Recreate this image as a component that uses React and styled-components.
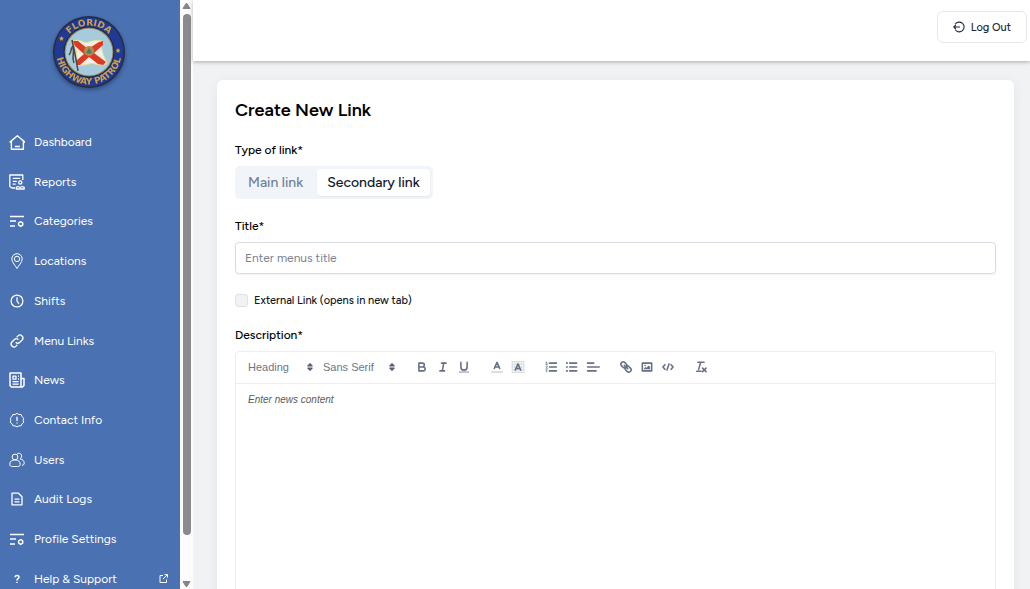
import { useState } from 'react';
import styled, { createGlobalStyle } from 'styled-components';

const GlobalStyle = createGlobalStyle`
    * {
        box-sizing: border-box;
    }
    body {
        margin: 0;
        overflow: hidden;
        background-color: #f1f2f4;
        font-family: "Figtree", Lato, "Liberation Sans", sans-serif;
        color: #000;
    }
    button, input {
        font-family: inherit;
    }
`;

const Page = styled.div`
    display: flex;
    height: 100vh;
`;

const Sidebar = styled.aside`
    width: 180px;
    flex-shrink: 0;
    display: flex;
    flex-direction: column;
    background-color: #4a71b2;
`;

const LogoLink = styled.a`
    display: flex;
    justify-content: center;
    padding: 14px 3px 42px 0;
    svg {
        filter: drop-shadow(0 2px 2px rgba(0, 0, 0, 0.35));
    }
`;

const Nav = styled.nav`
    flex: 1;
    display: flex;
    flex-direction: column;
    justify-content: space-between;
`;

const NavLink = styled.a`
    height: 20px;
    padding: 0 12px 0 9px;
    display: flex;
    align-items: center;
    gap: 9px;
    color: #fff;
    font-size: 12px;
    line-height: 20px;
    text-decoration: none;
    svg {
        flex-shrink: 0;
    }
    span {
        flex: 1;
    }
`;

const ScrollTrack = styled.div`
    width: 13px;
    flex-shrink: 0;
    display: flex;
    flex-direction: column;
    align-items: center;
    padding: 3px 0 2px;
    background-color: #fcfcfc;
`;

const ScrollThumb = styled.div`
    width: 8px;
    height: 521px;
    max-height: 90%;
    margin: 5px 0 auto;
    border-radius: 4px;
    background-color: #8b8b8b;
`;

const Main = styled.main`
    flex: 1;
    min-width: 0;
    display: flex;
    flex-direction: column;
`;

const Header = styled.header`
    height: 61px;
    flex-shrink: 0;
    display: flex;
    justify-content: flex-end;
    align-items: flex-start;
    padding: 11px 3px;
    background-color: #fff;
    box-shadow: 0 1px 4px rgba(0, 0, 0, 0.3);
    z-index: 1;
`;

const LogoutButton = styled.button`
    height: 32px;
    padding: 0 15px;
    display: flex;
    align-items: center;
    gap: 6px;
    border: 1px solid #e6e8ec;
    border-radius: 6px;
    background-color: #fff;
    color: #1f2937;
    font-size: 11px;
    font-weight: 500;
    cursor: pointer;
`;

const Content = styled.div`
    flex: 1;
    min-height: 0;
    padding: 19px 16px 19px 24px;
    overflow-y: auto;
    scrollbar-width: none;
`;

const Card = styled.form`
    display: flex;
    flex-direction: column;
    gap: 18px;
    padding: 18px;
    border-radius: 6px;
    background-color: #fff;
    box-shadow: 0 2px 12px rgba(0, 0, 0, 0.06);
`;

const Title = styled.h1`
    margin: 0;
    font-size: 18px;
    line-height: 25px;
    font-weight: 600;
`;

const Field = styled.div`
    display: flex;
    flex-direction: column;
    align-items: stretch;
    gap: 7px;
`;

const Label = styled.label`
    font-size: 12px;
    line-height: 18px;
    font-weight: 500;
`;

const Tabs = styled.div`
    align-self: flex-start;
    height: 33px;
    display: flex;
    gap: 4px;
    padding: 3px;
    border-radius: 5px;
    background-color: #f1f4f9;
`;

const Tab = styled.button`
    padding: 0 10px;
    border: none;
    border-radius: 4px;
    background-color: ${(props) => (props.$active ? '#fff' : 'transparent')};
    box-shadow: ${(props) => (props.$active ? '0 1px 2px rgba(0, 0, 0, 0.06)' : 'none')};
    color: ${(props) => (props.$active ? '#0f172a' : '#71809a')};
    font-size: 14px;
    font-weight: 500;
    cursor: pointer;
`;

const Input = styled.input`
    width: 100%;
    height: 32px;
    padding: 0 9px;
    border: 1px solid #d8dce6;
    border-radius: 4px;
    font-size: 12px;
    box-shadow: 0 1px 2px rgba(0, 0, 0, 0.05);
    &::placeholder {
        color: #788292;
    }
`;

const CheckRow = styled.label`
    height: 16px;
    display: flex;
    align-items: center;
    gap: 6px;
    font-size: 11px;
    font-weight: 500;
    color: #111827;
`;

const Checkbox = styled.input`
    appearance: none;
    width: 13px;
    height: 13px;
    margin: 0;
    border: 1px solid #dfe2e7;
    border-radius: 3px;
    background-color: #f1f2f4;
    &:checked {
        background-color: #4a71b2;
    }
`;

const Editor = styled.div`
    border: 1px solid #ebedf5;
    border-radius: 4px;
`;

const Toolbar = styled.div`
    height: 32px;
    display: flex;
    align-items: center;
    gap: 12px;
    padding: 0 6px 2px;
    border-bottom: 1px solid #ebedf5;
`;

const Group = styled.div`
    display: flex;
    align-items: center;
`;

const Picker = styled.div`
    display: flex;
    align-items: center;
    width: ${(props) => props.$width}px;
    svg {
        margin-left: -12px;
        pointer-events: none;
    }
`;

const Select = styled.select`
    appearance: none;
    width: 100%;
    height: 20px;
    padding: 0 6px;
    border: none;
    background-color: transparent;
    color: #6b7588;
    font-family: "Liberation Sans", Arial, sans-serif;
    font-size: 11px;
`;

const ToolButton = styled.button`
    width: 21px;
    height: 20px;
    padding: 0;
    display: flex;
    align-items: center;
    justify-content: center;
    border: none;
    background: none;
    cursor: pointer;
`;

const TextArea = styled.textarea`
    display: block;
    width: 100%;
    height: 320px;
    padding: 9px 12px;
    border: none;
    outline: none;
    resize: none;
    font-family: "Liberation Sans", Arial, sans-serif;
    font-size: 10px;
    line-height: 14px;
    &::placeholder {
        color: #5c5c5c;
        font-style: italic;
    }
`;

const navIcons = {
    home: <path d="M1.2 8.4L9 1.8l7.8 6.6M3 7.2v8h12v-8M6.5 12.5h5" strokeWidth="1.4" transform="translate(-.6 0)" />,
    reports: (
        <>
            <path d="M6 14H3L.8 12.5V1h13v5M3.8 4.3h7.3M3.8 7.3h4M3.8 10.2h2.8" />
            <circle cx="11.3" cy="8.4" r="1.6" />
            <path d="M7.3 15v-1.7l1.7-.8 2.2 1 2.2-1 1.8.8V15z" />
        </>
    ),
    settings: (
        <>
            <path d="M1 3.5h14M1 8h6M1 13h5" />
            <path d="M11.7 8.7l2 1.2v2.3l-2 1.2-2-1.2V9.9z" strokeWidth="1.5" />
        </>
    ),
    pin: (
        <g strokeWidth="1">
            <path d="M8 15.5C6.6 12.7 2.8 9.5 2.8 5.9a5.2 5.2 0 0 1 10.4 0c0 3.6-3.8 6.8-5.2 9.6z" />
            <circle cx="8" cy="5.9" r="2.7" />
        </g>
    ),
    clock: (
        <>
            <circle cx="8" cy="8" r="5.9" />
            <path d="M8 4.3V8l1.9 2.8" />
        </>
    ),
    link: (
        <>
            <path d="M6.7 9.3a2.9 2.9 0 0 0 4.1 0l2.3-2.3a2.9 2.9 0 0 0-4.1-4.1l-1.3 1.3" />
            <path d="M9.3 6.7a2.9 2.9 0 0 0-4.1 0L2.9 9a2.9 2.9 0 0 0 4.1 4.1l1.3-1.3" />
        </>
    ),
    news: (
        <>
            <path d="M1 1h11v14H2.5L1 13.5zM12 6.5h3v7L13.5 15H12" strokeWidth="1.5" />
            <path d="M4 4.2h3v3H4zM9 4.2h1M9 7h1M3.6 9.7h6M3.6 12.2h6" />
        </>
    ),
    info: (
        <g strokeWidth="1">
            <path d="M8 1.3l1.9 1.2 2.3.1.9 2.1 1.6 1.5-.5 2.1.5 2.1-1.7 1.4-.9 2-2.2.1L8 14.9l-1.9-1-2.2-.1-.9-2-1.7-1.4.5-2.1-.5-2.1 1.6-1.5.9-2.1 2.3-.1z" />
            <path d="M8 4.7V9M8 10.5v1" strokeWidth="1.3" />
        </g>
    ),
    users: (
        <g strokeWidth="1">
            <circle cx="6" cy="5" r="2.9" />
            <path d="M.8 12.3c0-3 2-4.4 5.2-4.4s5.2 1.4 5.2 4.4c0 1.6-1 2.2-2.5 2.2H3.3c-1.5 0-2.5-.6-2.5-2.2z" />
            <path d="M7.8 2.2c1-1.5 4.8-1.2 4.8 1.7 0 1.5-.6 2.4-1.6 3 2.7.5 4.2 1.9 4.2 4.3 0 1.3-.8 2-2.2 2.1" />
        </g>
    ),
    file: (
        <>
            <path d="M3 2.2h6.5L13 5.7v8.1H3z" />
            <path d="M5.5 8.2h5M5.5 10.9h5" />
        </>
    ),
    help: <path d="M6.1 6.3c0-2.3 3.9-2.3 3.9-.1 0 1.5-2 1.5-2 3.2M8 10.7v1.3" strokeWidth="1.5" />,
};

const NavIcon = ({ name }) => (
    <svg width="16" height="16" viewBox="0 0 16 16" fill="none" stroke="#fff" strokeWidth="1.3" strokeLinejoin="round" aria-hidden="true">
        {navIcons[name]}
    </svg>
);

const links = [
    { label: 'Dashboard', icon: 'home' },
    { label: 'Reports', icon: 'reports' },
    { label: 'Categories', icon: 'settings' },
    { label: 'Locations', icon: 'pin' },
    { label: 'Shifts', icon: 'clock' },
    { label: 'Menu Links', icon: 'link' },
    { label: 'News', icon: 'news' },
    { label: 'Contact Info', icon: 'info' },
    { label: 'Users', icon: 'users' },
    { label: 'Audit Logs', icon: 'file' },
    { label: 'Profile Settings', icon: 'settings' },
    { label: 'Help & Support', icon: 'help', external: true },
];

const Logo = () => (
    <svg width="76" height="76" viewBox="0 0 76 76" role="img" aria-label="Florida Highway Patrol">
        <defs>
            <path id="sealTop" d="M11.5 38a26.5 26.5 0 0 1 53 0" />
            <path id="sealBottom" d="M8.5 24a32.6 32.6 0 1 0 59 0" />
        </defs>
        <circle cx="38" cy="38" r="36" fill="#252c45" />
        <circle cx="38" cy="38" r="34.5" fill="#203a94" />
        <circle cx="38" cy="38" r="25" fill="#8f7c4c" stroke="#1b2140" strokeWidth="1" />
        <circle cx="38" cy="38" r="23.5" fill="#a5cbdc" />
        <g fill="#d0a044" fontFamily="DejaVu Sans" fontWeight="700" textAnchor="middle">
            <text fontSize="9"><textPath href="#sealTop" startOffset="50%">FLORIDA</textPath></text>
            <text fontSize="9"><textPath href="#sealBottom" startOffset="50%">HIGHWAY PATROL</textPath></text>
        </g>
        <path d="M10.5 22l.8 1.6 1.7.3-1.3 1.2.3 1.7-1.5-.8-1.5.8.3-1.7-1.2-1.2 1.7-.3zM67 34l.8 1.6 1.7.3-1.3 1.2.3 1.7-1.5-.8-1.5.8.3-1.7-1.2-1.2 1.7-.3z" fill="#d0a044" />
        <path d="M22 27c7-3 10 3 16 1s9-2 13-1c-2 5 1 14 5 22-7 5-12-1-18 1-4 1-9 2-13 1 2-9 0-18-3-24z" fill="#f3eee5" stroke="#eadf91" strokeWidth="1" />
        <path d="M22 27l5 0 10 8 11-7 4-1 0 4-9 8 12 9-3 3-5-1-9-7-9 8-4 0 1-5 7-6-9-8z" fill="#dc3a25" />
        <circle cx="38" cy="37" r="5" fill="#b18d4b" />
        <path d="M35 39l3-5 3 4-2 2z" fill="#507a69" />
        <path d="M21 26c2 9 4 18 6 31M22 32c-3 3-1 6-4 9M22 34c2 5-2 9 1 15" fill="none" stroke="#4c4746" strokeWidth="1.5" />
    </svg>
);

const ArrowIcon = ({ down }) => (
    <svg width="9" height="6" viewBox="0 0 9 6" aria-hidden="true">
        <path d={down ? 'M1 .5h7L5 5.5H4z' : 'M1 5.5h7L5 .5H4z'} fill="#858585" stroke="#858585" strokeLinejoin="round" />
    </svg>
);

const toolIcons = {
    bold: <path d="M5 4h4.5a2.5 2.5 0 0 1 0 5H5zM5 9h5.5a2.5 2.5 0 0 1 0 5H5z" />,
    italic: <path d="M7 4h6M5 14h6M8 14l2-10" />,
    underline: (
        <>
            <path d="M5 3v6a4 4 0 0 0 8 0V3" />
            <path d="M3 15.5h12" strokeWidth="1" />
        </>
    ),
    color: (
        <>
            <path d="M2 15.5h14" strokeWidth="1" opacity=".6" />
            <path d="M5.5 11L9 3l3.5 8M12 9H6" />
        </>
    ),
    background: (
        <>
            <path
                d="M1 2h16M1 4h16M1 6h16M1 8h16M1 10h16M1 12h16M1 14h16M1 16h16"
                strokeDasharray="1 1.5"
                strokeWidth="1"
                strokeLinecap="butt"
                opacity=".8"
            />
            <path d="M5.5 13L9 5l3.5 8M11.6 11H6.4" />
        </>
    ),
    ordered: (
        <>
            <path d="M7 4h9M7 9h9M7 14h9" />
            <path d="M2.5 5.5h2M3.5 5.5v-3l-1 .5M4.5 10.5h-2c0-1 1.9-1.2 1.9-2.1 0-.6-1-1.1-1.9-.4M2.5 14.6c1.2 1.2 2.5-.6.7-1.1 1.5-.5.8-1.9-.6-1.1" strokeWidth="1" />
        </>
    ),
    bullet: <path d="M6 4h9M6 9h9M6 14h9M2 4h1M2 9h1M2 14h1" />,
    align: <path d="M2 4h8M2 9h15M2 14h11" />,
    link: (
        <g transform="rotate(45 9 9)">
            <rect x="1" y="6" width="8.5" height="6" rx="3" />
            <rect x="8.5" y="6" width="8.500" height="6" rx="3" />
            <path d="M6 9h6" />
        </g>
    ),
    image: (
        <>
            <path d="M3 4h12v10H3z" />
            <path d="M5 12v-1l2-2 1.500 1L11 7l2 2v3z" fill="#667085" stroke="none" />
            <circle cx="6.5" cy="7" r="1" fill="#667085" stroke="none" />
        </>
    ),
    code: <path d="M5 6L2.500 9 5 12M13 6l2.500 3L13 12M10.300 5L7.700 13" />,
    clean: <path d="M5 3h8M6 12l2.500-9M3.500 14.500H9M11 10.500l4.500 4.500M15.500 10.500L11 15" />,
};

const ToolIcon = ({ name }) => (
    <svg width="14" height="14" viewBox="0 0 18 18" fill="none" stroke="#667085" strokeWidth="2" strokeLinecap="round" strokeLinejoin="round" aria-hidden="true">
        {toolIcons[name]}
    </svg>
);

const SortIcon = () => (
    <svg width="10" height="14" viewBox="0 0 18 18" aria-hidden="true">
        <path d="M5 7l4-4 4 4zM5 11l4 4 4-4z" fill="#556075" stroke="#556075" strokeWidth="2" strokeLinejoin="round" />
    </svg>
);

const toolGroups = [
    ['bold', 'italic', 'underline'],
    ['color', 'background'],
    ['ordered', 'bullet', 'align'],
    ['link', 'image', 'code'],
    ['clean'],
];

const App = () => {
    const [type, setType] = useState('Secondary link');
    const [title, setTitle] = useState('');
    const [external, setExternal] = useState(false);

    return (
        <>
            <GlobalStyle />
            <Page>
                <Sidebar>
                    <LogoLink href="#home"><Logo /></LogoLink>
                    <Nav>
                        {links.map((link) => (
                            <NavLink href="#" key={link.label}>
                                <NavIcon name={link.icon} />
                                <span>{link.label}</span>
                                {link.external && (
                                    <svg width="9" height="9" viewBox="0 0 9 9" fill="none" stroke="#fff" aria-hidden="true">
                                        <path d="M4 1.5H1v7h6.5V5.5M5.5.6h3v3M8.5.6L4 5" />
                                    </svg>
                                )}
                            </NavLink>
                        ))}
                    </Nav>
                </Sidebar>
                <ScrollTrack>
                    <ArrowIcon />
                    <ScrollThumb />
                    <ArrowIcon down />
                </ScrollTrack>
                <Main>
                    <Header>
                        <LogoutButton>
                            <svg width="12" height="12" viewBox="0 0 12 12" fill="none" stroke="#1f2937" strokeWidth="1.1" aria-hidden="true">
                                <path d="M2.2 3.2a4.9 4.9 0 1 1 0 5.6M7 6H.8M2.8 4L.8 6l2 2" />
                            </svg>
                            Log Out
                        </LogoutButton>
                    </Header>
                    <Content>
                        <Card onSubmit={(e) => e.preventDefault()}>
                            <Title>Create New Link</Title>
                            <Field>
                                <Label as="span" id="type">Type of link*</Label>
                                <Tabs role="group" aria-labelledby="type">
                                    {['Main link', 'Secondary link'].map((item) => (
                                        <Tab type="button" key={item} $active={type === item} onClick={() => setType(item)}>
                                            {item}
                                        </Tab>
                                    ))}
                                </Tabs>
                            </Field>
                            <Field>
                                <Label htmlFor="title">Title*</Label>
                                <Input
                                    id="title"
                                    placeholder="Enter menus title"
                                    value={title}
                                    onChange={(e) => setTitle(e.target.value)}
                                />
                            </Field>
                            <CheckRow>
                                <Checkbox type="checkbox" checked={external} onChange={(e) => setExternal(e.target.checked)} />
                                External Link (opens in new tab)
                            </CheckRow>
                            <Field>
                                <Label htmlFor="description">Description*</Label>
                                <Editor>
                                    <Toolbar>
                                        <Group>
                                            <Picker $width={75}>
                                                <Select aria-label="Text style"><option>Heading</option></Select>
                                                <SortIcon />
                                            </Picker>
                                            <Picker $width={82}>
                                                <Select aria-label="Font"><option>Sans Serif</option></Select>
                                                <SortIcon />
                                            </Picker>
                                        </Group>
                                        {toolGroups.map((group) => (
                                            <Group key={group[0]}>
                                                {group.map((name) => (
                                                    <ToolButton type="button" key={name} aria-label={name}>
                                                        <ToolIcon name={name} />
                                                    </ToolButton>
                                                ))}
                                            </Group>
                                        ))}
                                    </Toolbar>
                                    <TextArea id="description" placeholder="Enter news content" />
                                </Editor>
                            </Field>
                        </Card>
                    </Content>
                </Main>
            </Page>
        </>
    );
};

export default App;
